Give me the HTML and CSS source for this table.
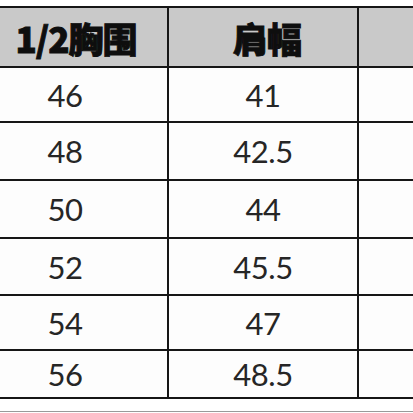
FILE: index.html
```html
<!DOCTYPE html>
<html lang="zh">
<head>
<meta charset="utf-8">
<link rel="stylesheet" href="styles.css">
</head>
<body>
<div class="sheet">
  <div class="chart">
    <div class="cell first head head-first">1/2胸围</div>
    <div class="cell head">肩幅</div>
    <div class="cell head"></div>

    <div class="cell first">46</div><div class="cell">41</div><div class="cell"></div>
    <div class="cell first">48</div><div class="cell">42.5</div><div class="cell"></div>
    <div class="cell first">50</div><div class="cell">44</div><div class="cell"></div>
    <div class="cell first">52</div><div class="cell">45.5</div><div class="cell"></div>
    <div class="cell first">54</div><div class="cell">47</div><div class="cell"></div>
    <div class="cell first">56</div><div class="cell">48.5</div><div class="cell"></div>
  </div>
  <div class="rule"></div>
</div>
</body>
</html>
```

FILE: styles.css
```css
html, body {
  margin: 0;
  padding: 0;
  background: #ffffff;
}

.sheet {
  width: 413px;
  padding-top: 6px;
}

.chart {
  display: grid;
  grid-template-columns: 167px 188px 54px;
  grid-template-rows: 58px 53px 56px 56px 55px 53px 46px;
  column-gap: 2px;
  row-gap: 2px;
  padding: 2px 0;
  background: #161616;
}

.cell {
  background: #fdfdfd;
  display: flex;
  align-items: center;
  justify-content: center;
  font-family: "Lato", "Open Sans", sans-serif;
  font-size: 31px;
  color: #262626;
  letter-spacing: -0.5px;
}

.first {
  padding-right: 37px;
}

.head {
  background: #c9c9c9;
  font-family: "Noto Sans CJK SC", "Noto Sans", sans-serif;
  font-weight: 900;
  font-size: 35px;
  color: #0e0e0e;
  letter-spacing: -1px;
  -webkit-text-stroke: 0.9px #0e0e0e;
  padding-left: 8px;
}

.head-first {
  padding-left: 0;
  padding-right: 15px;
}

.rule {
  margin-top: 12px;
  height: 1px;
  background: #9a9a9a;
}
```
